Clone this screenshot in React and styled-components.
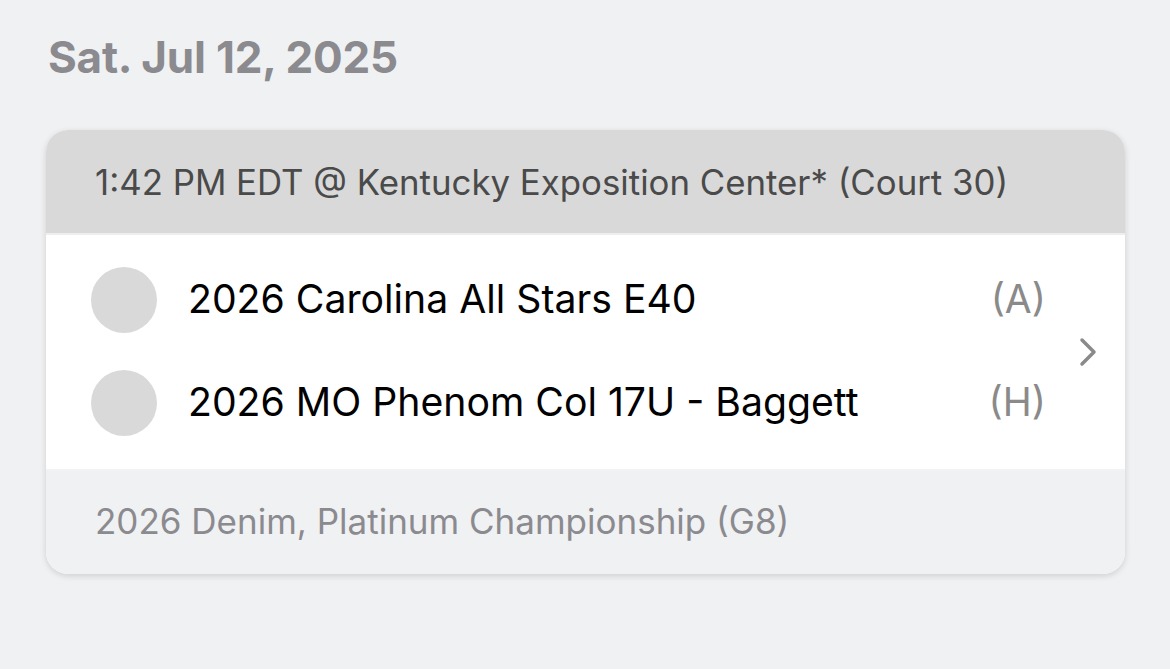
import React from 'react';
import styled, { createGlobalStyle } from 'styled-components';

const GlobalStyle = createGlobalStyle`
  html, body {
    margin: 0;
    padding: 0;
    background: #f0f1f3;
    font-family: Inter, "Noto Sans", sans-serif;
  }
`;

const Page = styled.div`
  width: 1170px;
  height: 669px;
  box-sizing: border-box;
  padding: 26px 45px 0 46px;
  background: #f0f1f3;
`;

const DateTitle = styled.h1`
  margin: 0 0 0 2px;
  font-size: 44px;
  font-weight: 700;
  color: #8b8a8f;
  line-height: 62px;
  letter-spacing: -0.2px;
`;

const Card = styled.div`
  margin-top: 42px;
  border-radius: 22px;
  overflow: hidden;
  background: #fff;
  box-shadow: 0 2px 6px rgba(0, 0, 0, 0.14);
`;

const Header = styled.div`
  height: 103px;
  display: flex;
  align-items: center;
  padding-left: 49px;
  background: #d9d9d9;
  color: #4a4a4a;
  font-size: 34.8px;
  border-bottom: 2px solid #eeeeee;
`;

const Body = styled.div`
  display: flex;
  align-items: center;
  padding: 32px 0 33px 45px;
  border-bottom: 2px solid #f3f3f3;
`;

const Teams = styled.div`
  flex: 1;
  display: flex;
  flex-direction: column;
  gap: 37px;
`;

const TeamRow = styled.div`
  display: flex;
  align-items: center;
  height: 66px;
`;

const Avatar = styled.span`
  width: 66px;
  height: 66px;
  border-radius: 50%;
  background: #d9d9d9;
  flex-shrink: 0;
`;

const TeamName = styled.span`
  flex: 1;
  margin-left: 31px;
  margin-bottom: 3px;
  font-size: 39.2px;
  color: #000;
`;

const Side = styled.span`
  margin-bottom: 3px;
  font-size: 39px;
  color: #8a8a8a;
`;

const Chevron = styled.div`
  width: 79px;
  display: flex;
  justify-content: center;
  padding-left: 6px;
  box-sizing: border-box;
  color: #8a8a8a;
`;

const Footer = styled.div`
  height: 103px;
  display: flex;
  align-items: center;
  padding-left: 49px;
  padding-bottom: 3px;
  box-sizing: border-box;
  background: #f0f1f3;
  color: #8b8a8f;
  font-size: 35px;
`;

const teams = [
  { name: '2026 Carolina All Stars E40', side: '(A)' },
  { name: '2026 MO Phenom Col 17U - Baggett', side: '(H)' },
];

export default function App() {
  return (
    <Page>
      <GlobalStyle />
      <DateTitle>Sat. Jul 12, 2025</DateTitle>
      <Card>
        <Header>1:42 PM EDT @ Kentucky Exposition Center* (Court 30)</Header>
        <Body>
          <Teams>
            {teams.map((t) => (
              <TeamRow key={t.name}>
                <Avatar />
                <TeamName>{t.name}</TeamName>
                <Side>{t.side}</Side>
              </TeamRow>
            ))}
          </Teams>
          <Chevron>
            <svg width="22" height="30" viewBox="0 0 22 30" fill="none">
              <path d="M4 3 L16 15 L4 27" stroke="currentColor" strokeWidth="3.5" strokeLinecap="round" strokeLinejoin="round" />
            </svg>
          </Chevron>
        </Body>
        <Footer>2026 Denim, Platinum Championship (G8)</Footer>
      </Card>
    </Page>
  );
}
